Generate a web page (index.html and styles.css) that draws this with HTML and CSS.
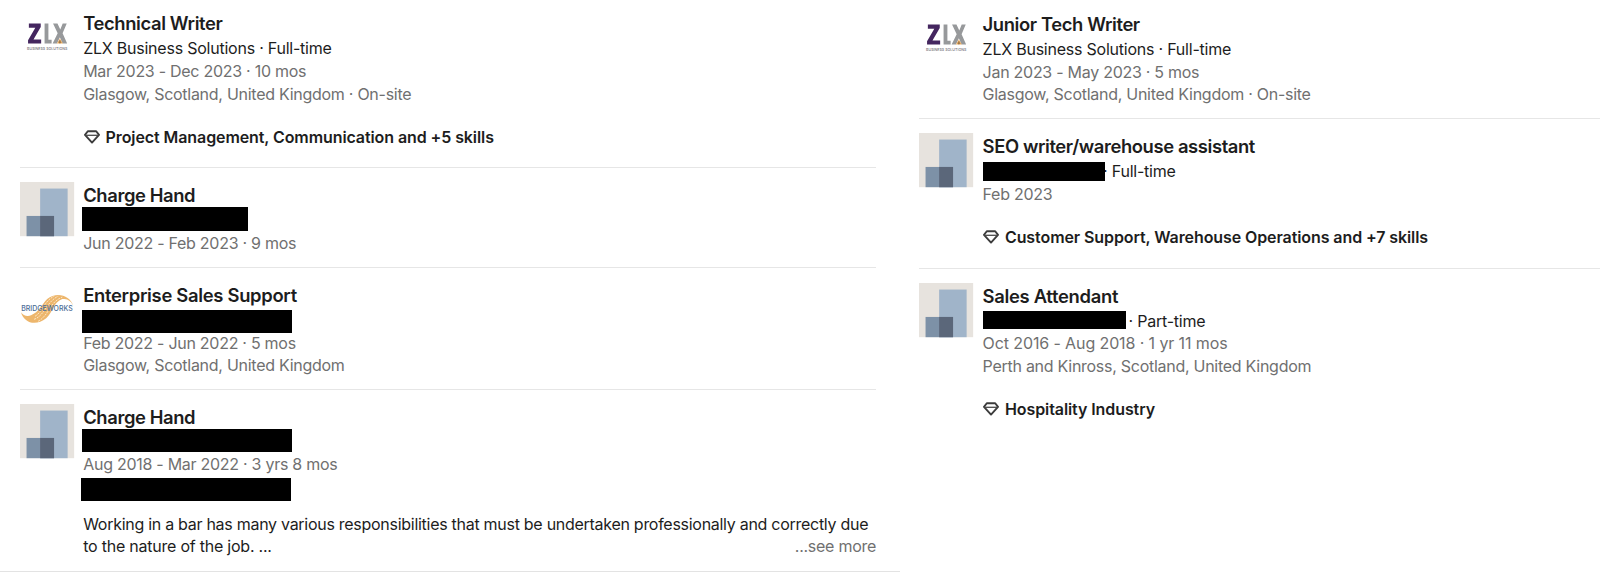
FILE: index.html
```html
<!DOCTYPE html>
<html lang="en">
<head>
<meta charset="utf-8">
<title>Experience</title>
<link rel="stylesheet" href="styles.css">
</head>
<body>
<svg class="defs" width="0" height="0" aria-hidden="true">
  <symbol id="company" viewBox="0 0 54 54">
    <rect width="54" height="54" fill="#e7e3de"/>
    <rect x="20" y="6.5" width="27.3" height="47.5" fill="#a0b4c9"/>
    <rect x="6.5" y="33.7" width="27.3" height="20.3" fill="#7d91a7"/>
    <rect x="20" y="33.7" width="13.8" height="20.3" fill="#5b677a"/>
  </symbol>
  <symbol id="gem" viewBox="0 0 16 14">
    <path d="M3.8 1.2H12.2L15 4.9L8 12.6L1 4.9Z" fill="none" stroke="#3c3c3c" stroke-width="1.9" stroke-linejoin="round"/>
    <path d="M1.5 5.3H14.5" fill="none" stroke="#4a4a4a" stroke-width="1.3"/>
  </symbol>
  <symbol id="zlx" viewBox="0 0 54 54">
    <path d="M8.8 10.5H20.6V14L13.4 26.3H21V30.3H8V27L15.2 14.6H8.8Z" fill="#44265f"/>
    <path d="M24.4 10.5H28.2V26.6H31.4V30.3H24.4Z" fill="#97999b"/>
    <path d="M32.8 10.5H37.2L40 16.4L42.4 10.5H46.4L42.3 20L46.8 30.3H42.2L39.6 24L36.7 30.3H32.4L37.4 20Z" fill="#97999b"/>
    <path d="M39.6 25.2L42.5 30.3H36.7Z" fill="#f2b264"/>
    <path d="M38.3 28.9H41M39.6 27V30.3" stroke="#755a3b" stroke-width=".7"/>
  </symbol>
</svg>
<main class="page">
  <section class="column column-left">
    <article class="role">
      <svg class="logo logo-zlx" viewBox="0 0 54 54"><use href="#zlx"/><text x="7" y="36.4" class="zlx-name" textLength="40" lengthAdjust="spacingAndGlyphs">BUSINESS SOLUTIONS</text></svg>
      <div class="details">
        <h2 class="title">Technical Writer</h2>
        <p class="line">ZLX Business Solutions · Full-time</p>
        <p class="line muted">Mar 2023 - Dec 2023 · 10 mos</p>
        <p class="line muted">Glasgow, Scotland, United Kingdom · On-site</p>
        <p class="line skills"><svg class="gem"><use href="#gem"/></svg><span>Project Management, Communication and +5 skills</span></p>
      </div>
    </article>
    <article class="role">
      <svg class="logo"><use href="#company"/></svg>
      <div class="details">
        <h2 class="title">Charge Hand</h2>
        <p class="line"><span class="bar bar-short"></span></p>
        <p class="line muted">Jun 2022 - Feb 2023 · 9 mos</p>
      </div>
    </article>
    <article class="role role-bridge">
      <svg class="logo" viewBox="0 0 54 54">
        <path d="M53 24C50 13 36 9 27 17C21 23 19 30 11 33C7 35 3 33 1 30C4 41 16 44 26 36C33 30 33 20 42 17C47 16 51 19 53 24Z" fill="#edb66c"/>
        <path d="M14 37C24 34 26 20 38 14M18 39C29 33 29 20 42 15M15 34C22 30 24 19 34 14" fill="none" stroke="#fff3df" stroke-width=".8" stroke-dasharray="2 1"/>
        <text x="1.3" y="29" class="bridge-name" textLength="51" lengthAdjust="spacingAndGlyphs">BRIDGEWORKS</text>
      </svg>
      <div class="details">
        <h2 class="title title-wide">Enterprise Sales Support</h2>
        <p class="line"><span class="bar bar-low"></span></p>
        <p class="line muted">Feb 2022 - Jun 2022 · 5 mos</p>
        <p class="line muted">Glasgow, Scotland, United Kingdom</p>
      </div>
    </article>
    <article class="role">
      <svg class="logo"><use href="#company"/></svg>
      <div class="details">
        <h2 class="title">Charge Hand</h2>
        <p class="line"><span class="bar"></span></p>
        <p class="line muted">Aug 2018 - Mar 2022 · 3 yrs 8 mos</p>
        <p class="line"><span class="bar bar-location"></span></p>
        <div class="description">
          <p class="line prose">Working in a bar has many various responsibilities that must be undertaken professionally and correctly due</p>
          <p class="line split"><span>to the nature of the job. ...</span><span class="muted">...see more</span></p>
        </div>
      </div>
    </article>
  </section>
  <section class="column column-right">
    <article class="role">
      <svg class="logo logo-zlx" viewBox="0 0 54 54"><use href="#zlx"/><text x="7" y="36.4" class="zlx-name" textLength="40" lengthAdjust="spacingAndGlyphs">BUSINESS SOLUTIONS</text></svg>
      <div class="details">
        <h2 class="title">Junior Tech Writer</h2>
        <p class="line">ZLX Business Solutions · Full-time</p>
        <p class="line muted">Jan 2023 - May 2023 · 5 mos</p>
        <p class="line muted">Glasgow, Scotland, United Kingdom · On-site</p>
      </div>
    </article>
    <article class="role">
      <svg class="logo"><use href="#company"/></svg>
      <div class="details">
        <h2 class="title">SEO writer/warehouse assistant</h2>
        <p class="line"><span class="bar bar-seo"></span><span class="after-seo">· Full-time</span></p>
        <p class="line muted">Feb 2023</p>
        <p class="line skills"><svg class="gem"><use href="#gem"/></svg><span>Customer Support, Warehouse Operations and +7 skills</span></p>
      </div>
    </article>
    <article class="role">
      <svg class="logo"><use href="#company"/></svg>
      <div class="details">
        <h2 class="title title-wide">Sales Attendant</h2>
        <p class="line"><span class="bar bar-sales"></span><span class="after-sales">· Part-time</span></p>
        <p class="line muted dates-wide">Oct 2016 - Aug 2018 · 1 yr 11 mos</p>
        <p class="line muted">Perth and Kinross, Scotland, United Kingdom</p>
        <p class="line skills"><svg class="gem"><use href="#gem"/></svg><span>Hospitality Industry</span></p>
      </div>
    </article>
  </section>
</main>
</body>
</html>
```

FILE: styles.css
```css
* { box-sizing: border-box; }
body { margin: 0; background: #fff; color: #1d1d1d; font-family: Inter, "Liberation Sans", sans-serif; }
h2, p { margin: 0; }
.defs { display: block; height: 0; }
.page { display: flex; width: 1600px; height: 575px; overflow: hidden; }
.column-left { width: 900px; height: 572px; padding: 0 24px 0 20px; border-bottom: 1px solid #e3e3e3; }
.column-right { width: 700px; padding: .6px 0 0 19px; }
.role { display: flex; gap: 8.8px; padding: 14px 0 12.8px; }
.column-right .role { gap: 9.2px; }
.role:first-child { padding-top: 10.4px; }
.column-right .role:first-child { padding-bottom: 12.2px; }
.role + .role { border-top: 1px solid #e6e6e6; }
.role-bridge { padding-bottom: 12px; }
.logo { width: 54.4px; height: 54.4px; flex: none; overflow: visible; }
.logo-zlx { margin-top: 3px; }
.zlx-name { font-size: 4px; font-weight: 500; letter-spacing: 0; fill: #77757c; }
.bridge-name { font-size: 7.2px; font-weight: 500; letter-spacing: 0; fill: #4a6c96; }
.details { flex: 1; min-width: 0; }
.title { height: 27px; line-height: 27px; font-size: 18.4px; font-weight: 600; letter-spacing: -.39px; white-space: nowrap; }
.title-wide { letter-spacing: -.3px; }
.line { display: flex; align-items: center; height: 22.6px; line-height: 22.6px; font-size: 16px; letter-spacing: -.23px; white-space: nowrap; }
.muted { color: #707070; letter-spacing: -.27px; }
.dates-wide { letter-spacing: -.11px; }
.prose { letter-spacing: -.28px; }
.skills { margin: 20.4px 0 6px; font-weight: 600; gap: 5.6px; letter-spacing: -.09px; }
.column-right .skills { margin-bottom: 6.6px; }
.gem { width: 16px; height: 14px; margin-left: .8px; flex: none; }
.bar { flex: none; width: 210px; height: 23.5px; margin: -3px 0 0 -1.5px; background: #000; }
.bar-short { width: 166px; }
.bar-low { margin-top: 3px; }
.bar-location { margin: 5px 0 0 -2px; }
.bar-seo { position: relative; z-index: 1; width: 122.5px; height: 19.5px; margin: 0; }
.bar-sales { width: 143px; height: 18px; margin: -2px 0 0; }
.after-seo { margin-left: -2px; }
.after-sales { margin-left: 3px; }
.description { padding-top: 14px; }
.split { justify-content: space-between; }
```
